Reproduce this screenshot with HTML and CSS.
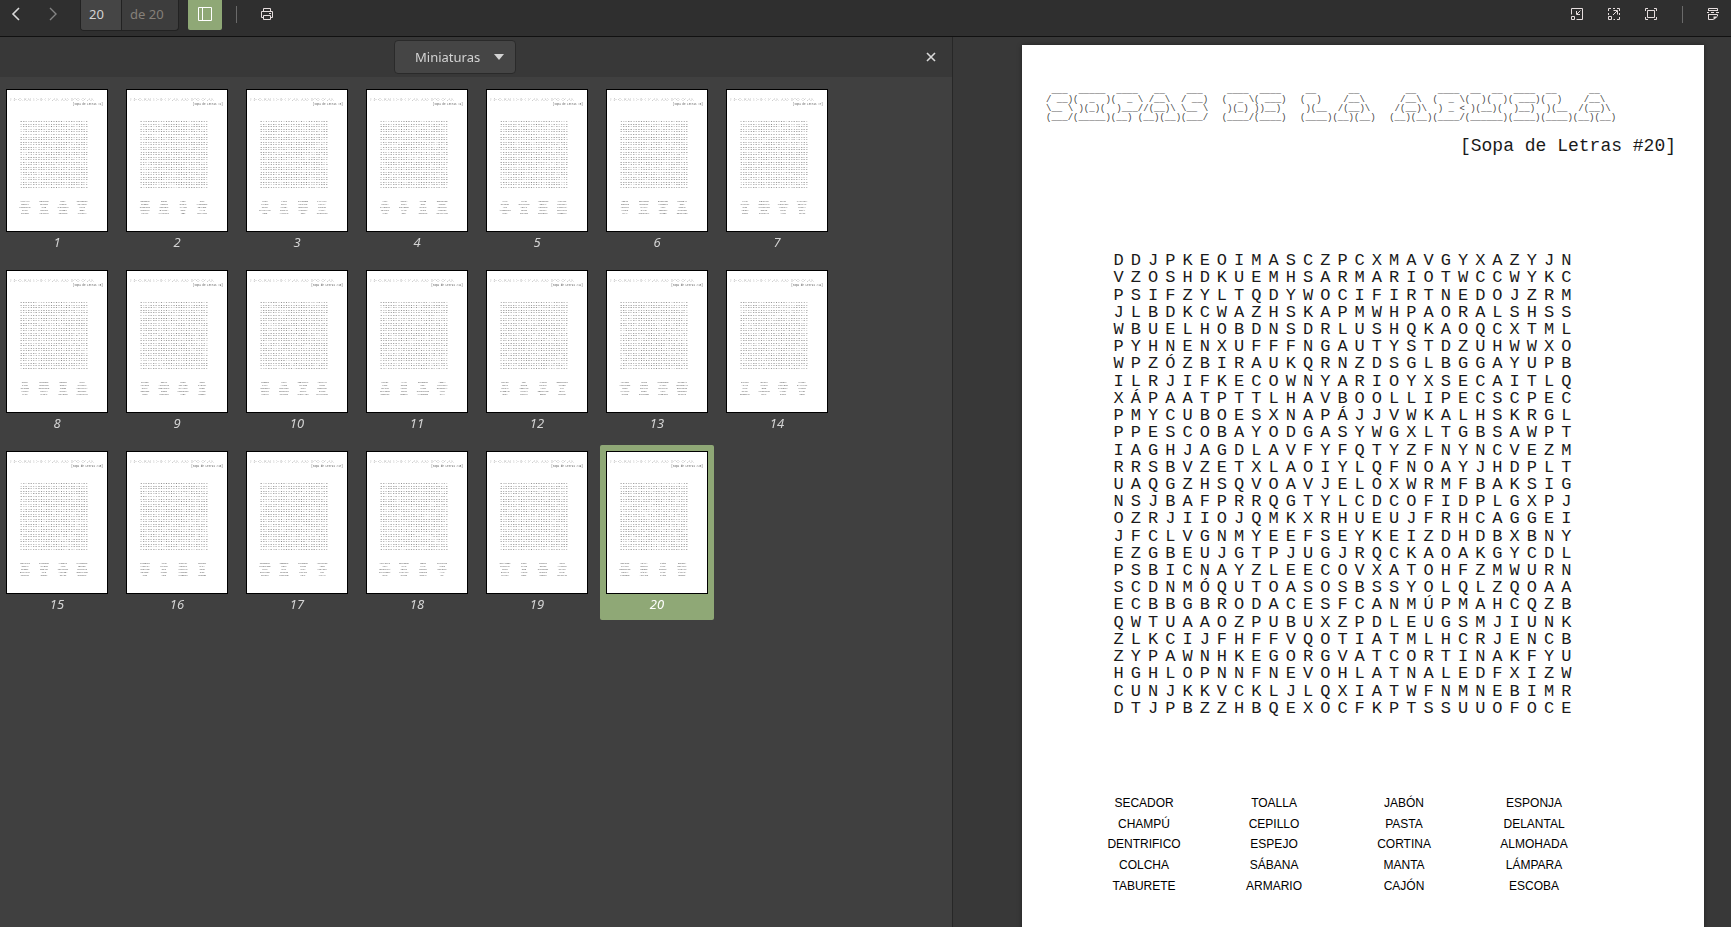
FILE: index.html
```html
<!DOCTYPE html>
<html lang="es">
<head>
<meta charset="utf-8">
<title>Sopas de la abuela</title>
<link rel="stylesheet" href="styles.css">
</head>
<body>
<header class="toolbar">
  <div class="group">
    <button class="tool nav" aria-label="Página anterior"><svg width="16" height="16" viewBox="0 0 16 16"><path d="M11 2 5 8l6 6" stroke-width="1.6"/></svg></button>
    <button class="tool nav dim" aria-label="Página siguiente"><svg width="16" height="16" viewBox="0 0 16 16"><path d="M5 2l6 6-6 6" stroke-width="1.4"/></svg></button>
    <div class="pager">
      <input id="page" class="pager-input" value="20" aria-label="Página">
      <label class="pager-total" for="page">de 20</label>
    </div>
    <button class="tool active" aria-label="Panel lateral"><svg width="16" height="16" viewBox="0 0 16 16"><path d="M1.5 1.5h13v13h-13zM5.5 1.5v13"/></svg></button>
    <span class="sep"></span>
    <button class="tool" aria-label="Imprimir"><svg width="16" height="16" viewBox="0 0 16 16"><path d="M4.500 5.500v-3h7v3M4.500 11.500h-2v-6h11v6h-2M4.500 9.500h7v4h-7zM10 7.500h2"/></svg></button>
  </div>
  <div class="group right">
    <button class="tool" aria-label="Reducir"><svg width="16" height="16" viewBox="0 0 16 16"><path d="M2.500 8.500v-6h11v11h-6M2.500 10.500h3v3h-3zM11.500 4.500 8 8M7.500 5v3.500H11"/></svg></button>
    <button class="tool" aria-label="Ajustar a la ventana"><svg width="16" height="16" viewBox="0 0 16 16"><path d="M2.500 5V2.500H5M7 2.500h2M11 2.500h2.500V5M13.500 7v2M13.500 11v2.500H11M2.500 7v2M7.500 13.500H9M2.500 10.500h3v3h-3zM7 9l4-4M7.500 4.500h4v4"/></svg></button>
    <button class="tool" aria-label="Pantalla completa"><svg width="16" height="16" viewBox="0 0 16 16"><path d="M2.500 5V2.500H5M11 2.500h2.500V5M13.500 11v2.500H11M5 13.500H2.500V11M4.500 4.500h7v7h-7z"/></svg></button>
    <span class="sep"></span>
    <button class="tool last" aria-label="Página continua"><svg width="16" height="16" viewBox="0 0 16 16"><path d="M3.500 5V2.500h9V5M3.500 4.500h9M2 6.500h2M6 6.500h3M11 6.500h3M3.500 8v5.500h5M3.500 8.500h9V10"/><path class="solid" d="M8.500 14v-3.500H13z"/></svg></button>
  </div>
</header>
<main class="viewer">
  <aside class="sidebar">
    <div class="side-head">
      <div class="combo-slot">
        <div class="combo">
          <select class="combo-select" aria-label="Vista del panel"><option>Miniaturas</option></select>
          <svg class="combo-arrow" width="10" height="6" viewBox="0 0 10 6"><path class="solid" d="M0 0h10L5 6z"/></svg>
        </div>
      </div>
      <button class="close" aria-label="Cerrar panel"><svg width="16" height="16" viewBox="0 0 16 16"><path d="M4 4l8 8M12 4l-8 8" stroke-width="1.6"/></svg></button>
    </div>
    <div class="thumbs" id="thumbs"></div>
  </aside>
  <section class="document">
    <article class="page">
      <h1 class="banner" aria-label="Sopas de la abuela">
<pre> ___  _____  ____   __    ___ 
/ __)(  _  )(  _ \ /__\  / __)
\__ \ )(_)(  )___//(__)\ \__ \
(___/(_____)(__) (__)(__)(___/</pre>
<pre> ____  ____ 
(  _ \( ___)
 )(_) ))__) 
(____/(____)</pre>
<pre> __      __   
(  )    /__\  
 )(__  /(__)\ 
(____)(__)(__)</pre>
<pre>   __    ____  __  __  ____  __      __   
  /__\  (  _ \(  )(  )( ___)(  )    /__\  
 /(__)\  ) _ &lt; )(__)(  )__)  )(__  /(__)\ 
(__)(__)(____/(______)(____)(____)(__)(__)</pre>
      </h1>
      <p class="subtitle">[Sopa de Letras #20]</p>
      <table class="letters"><tbody id="letters"></tbody></table>
      <table class="words" id="words">
        <tr><td>SECADOR</td><td>TOALLA</td><td>JABÓN</td><td>ESPONJA</td></tr>
        <tr><td>CHAMPÚ</td><td>CEPILLO</td><td>PASTA</td><td>DELANTAL</td></tr>
        <tr><td>DENTRIFICO</td><td>ESPEJO</td><td>CORTINA</td><td>ALMOHADA</td></tr>
        <tr><td>COLCHA</td><td>SÁBANA</td><td>MANTA</td><td>LÁMPARA</td></tr>
        <tr><td>TABURETE</td><td>ARMARIO</td><td>CAJÓN</td><td>ESCOBA</td></tr>
      </table>
    </article>
  </section>
</main>
<script src="script.js"></script>
</body>
</html>
```
FILE: styles.css
```css
* { box-sizing: border-box; }
body {
  margin: 0;
  height: 100vh;
  display: flex;
  flex-direction: column;
  overflow: hidden;
  background: #383838;
  color: #d3d3d3;
  font: 13px/20px "Noto Sans", "Open Sans", sans-serif;
}
button, input, select { font: inherit; color: inherit; border: 0; padding: 0; margin: 0; }
button { background: none; }
svg { display: block; fill: none; stroke: currentColor; }
.solid { fill: currentColor; stroke: none; }

.toolbar {
  flex: none;
  display: flex;
  justify-content: space-between;
  height: 37px;
  background: #2f2f2f;
  border-bottom: 1px solid #111;
}
.group { display: flex; align-items: flex-start; }
.tool {
  width: 34px;
  height: 30px;
  padding-bottom: 2px;
  display: grid;
  place-items: center;
  color: #e6dede;
}
.nav { width: 32px; margin-right: 5px; color: #dadada; }
.dim { color: #858585; }
.active { background: #8fa876; color: #fff; border-radius: 0 0 2px 2px; }
.pager {
  display: flex;
  height: 31px;
  margin: 0 9px 0 6px;
  border: 1px solid #222;
  border-top: 0;
  border-radius: 0 0 4px 4px;
  background: #3d3d3d;
  overflow: hidden;
}
.pager-input {
  width: 41px;
  padding: 0 8px 3px;
  background: #454545;
  border-right: 1px solid #222;
}
.pager-total { width: 56px; padding: 4px 8px; color: #858079; }
.sep { width: 1px; height: 17px; margin: 6px 13px 0 14px; background: #6a6a6a; }
.right { gap: 3px; }
.right .sep { margin: 6px 10px 0 11px; }
.right .last { margin-right: 1px; }

.viewer { flex: 1; min-height: 0; display: grid; grid-template-columns: 55% 1fr; }
.sidebar { background: #404040; overflow: hidden; }
.side-head {
  display: flex;
  align-items: center;
  height: 40px;
  background: #383838;
}
.combo-slot { flex: 1; display: flex; justify-content: center; }
.combo { position: relative; }
.combo-select {
  appearance: none;
  display: block;
  width: 122px;
  height: 34px;
  padding: 0 20px;
  background: #454545;
  border: 1px solid #2a2a2a;
  border-radius: 4px;
}
.combo-arrow { position: absolute; right: 12px; top: 14px; pointer-events: none; }
.close { width: 42px; height: 34px; display: grid; place-items: center; color: #dadada; }

.thumbs { display: flex; flex-wrap: wrap; gap: 6px; padding: 6px 80px 6px 0; }
.thumb {
  width: 114px;
  height: 175px;
  padding: 6px;
  border-radius: 2px;
  color: #d3d3d3;
  font-style: italic;
  line-height: 20px;
  text-align: center;
}
.thumb canvas { display: block; border: 1px solid #000; background: #fff; }
.thumb.selected { background: #8fa876; color: #fff; }

.document { padding: 8px 27px 0 69px; border-left: 1px solid #272727; overflow: hidden; }
.page {
  min-height: 955px;
  padding: 42px 28px 40px 24px;
  background: #fff;
  color: #1a1a1a;
  box-shadow: 0 0 4px #222;
}
.banner { display: flex; justify-content: space-between; max-width: 570px; margin: 0; }
.banner pre { margin: 0; color: #444; font: 9px/9px "Liberation Mono", monospace; }
.subtitle {
  margin: 13px 0 96px;
  font: 18px/20px "Liberation Mono", monospace;
  text-align: right;
}
.page table { border-collapse: collapse; table-layout: fixed; }
.page td { padding: 0; text-align: center; }
.letters {
  width: 465px;
  height: 465px;
  margin-left: 64px;
  font: 17px/17px "Liberation Mono", monospace;
}
.page .words {
  width: 520px;
  height: 103px;
  margin: 76px 0 0 33px;
  color: #000;
  font: 12px/16px "Liberation Sans", sans-serif;
}
```
FILE: script.js
```js
const rows = [
  "DDJPKEOIMASCZPCXMAVGYXAZYJN",
  "VZOSHDKUEMHSARMARIOTWCCWYKC",
  "PSIFZYLTQDYWOCIFIRTNEDOJZRM",
  "JLBDKCWAZHSKAPMWHPAORALSHSS",
  "WBUELHOBDNSDRLUSHQKAOQCXTML",
  "PYHNENXUFFFNGAUTYSTDZUHWWXO",
  "WPZÓZBIRAUKQRNZDSGLBGGAYUPB",
  "ILRJIFKECOWNYARIOYXSECAITLQ",
  "XÁPAATPTTLHAVBOOLLIPECSCPEC",
  "PMYCUBOESXNAPÁJJVWKALHSKRGL",
  "PPESCOBAYODGASYWGXLTGBSAWPT",
  "IAGHJAGDLAVFYFQTYZFNYNCVEZM",
  "RRSBVZETXLAOIYLQFNOAYJHDPLT",
  "UAQGZHSQVOAVJELOXWRMFBAKSIG",
  "NSJBAFPRRQGTYLCDCOFIDPLGXPJ",
  "OZRJIIOJQMKXRHUEUJFRHCAGGEI",
  "JFCLVGNMYEEFSEYKEIZDHDBXBNY",
  "EZGBEUJGTPJUGJRQCKAOAKGYCDL",
  "PSBICNAYZLEECOVXATOHFZMWURN",
  "SCDNMÓQUTOASOSBSSYOLQLZQOAA",
  "ECBBGBRODACESFCANMÚPMAHCQZB",
  "QWTUAAOZPUBUXZPDLEUGSMJIUNK",
  "ZLKCIJFHFFVQOTIATMLHCRJENCB",
  "ZYPAWNHKEGORGVATCORTINAKFYU",
  "HGHLOPNNFNEVOHLATNALEDFXIZW",
  "CUNJKKVCKLJLQXIATWFNMNEBIMR",
  "DTJPBZZHBQEXOCFKPTSSUUOFOCE"
];

document.getElementById("letters").innerHTML = rows
  .map(r => "<tr>" + [...r].map(c => `<td>${c}</td>`).join("") + "</tr>")
  .join("");

const banner = [...document.querySelectorAll(".banner pre")].map(p => p.textContent.split("\n"));
const bannerX = [24, 201, 278, 366];
const words = [...document.querySelectorAll("#words tr")].map(tr => [...tr.cells].map(td => td.textContent));

// Small repeatable generator, so each thumbnail keeps its own letters.
function random(seed) {
  let s = seed * 7919;
  return () => (s = (s * 16807 + 11) % 2147483647) / 2147483647;
}

function drawPage(ctx, n) {
  const rnd = random(n);
  const letter = () => String.fromCharCode(65 + Math.floor(rnd() * 26));
  ctx.scale(100 / 682, 100 / 682);
  ctx.textAlign = "left";
  ctx.fillStyle = "#333";
  ctx.font = "9px 'Liberation Mono'";
  banner.forEach((lines, i) => lines.forEach((l, j) => ctx.fillText(l, bannerX[i], 49 + j * 9)));
  ctx.fillStyle = "#555";
  ctx.font = "18px 'Liberation Mono'";
  ctx.textAlign = "right";
  ctx.fillText(`[Sopa de Letras #${n}]`, 654, 105);
  ctx.textAlign = "center";
  ctx.font = "17px 'Liberation Mono'";
  rows.forEach((r, y) => [...r].forEach((c, x) =>
    ctx.fillText(n === 20 ? c : letter(), 97 + x * 17.2, 221 + y * 17.2)));
  ctx.font = "12px 'Liberation Sans'";
  words.forEach((line, y) => line.forEach((w, x) => {
    const text = n === 20 ? w : Array.from({ length: 4 + Math.floor(rnd() * 6) }, letter).join("");
    ctx.fillText(text, 122 + x * 130, 763 + y * 20.8);
  }));
}

const thumbs = document.getElementById("thumbs");
for (let n = 1; n <= 20; n++) {
  const item = document.createElement("button");
  item.className = n === 20 ? "thumb selected" : "thumb";
  const canvas = document.createElement("canvas");
  canvas.width = 100;
  canvas.height = 141;
  item.append(canvas, String(n));
  thumbs.append(item);
  drawPage(canvas.getContext("2d"), n);
}
```
